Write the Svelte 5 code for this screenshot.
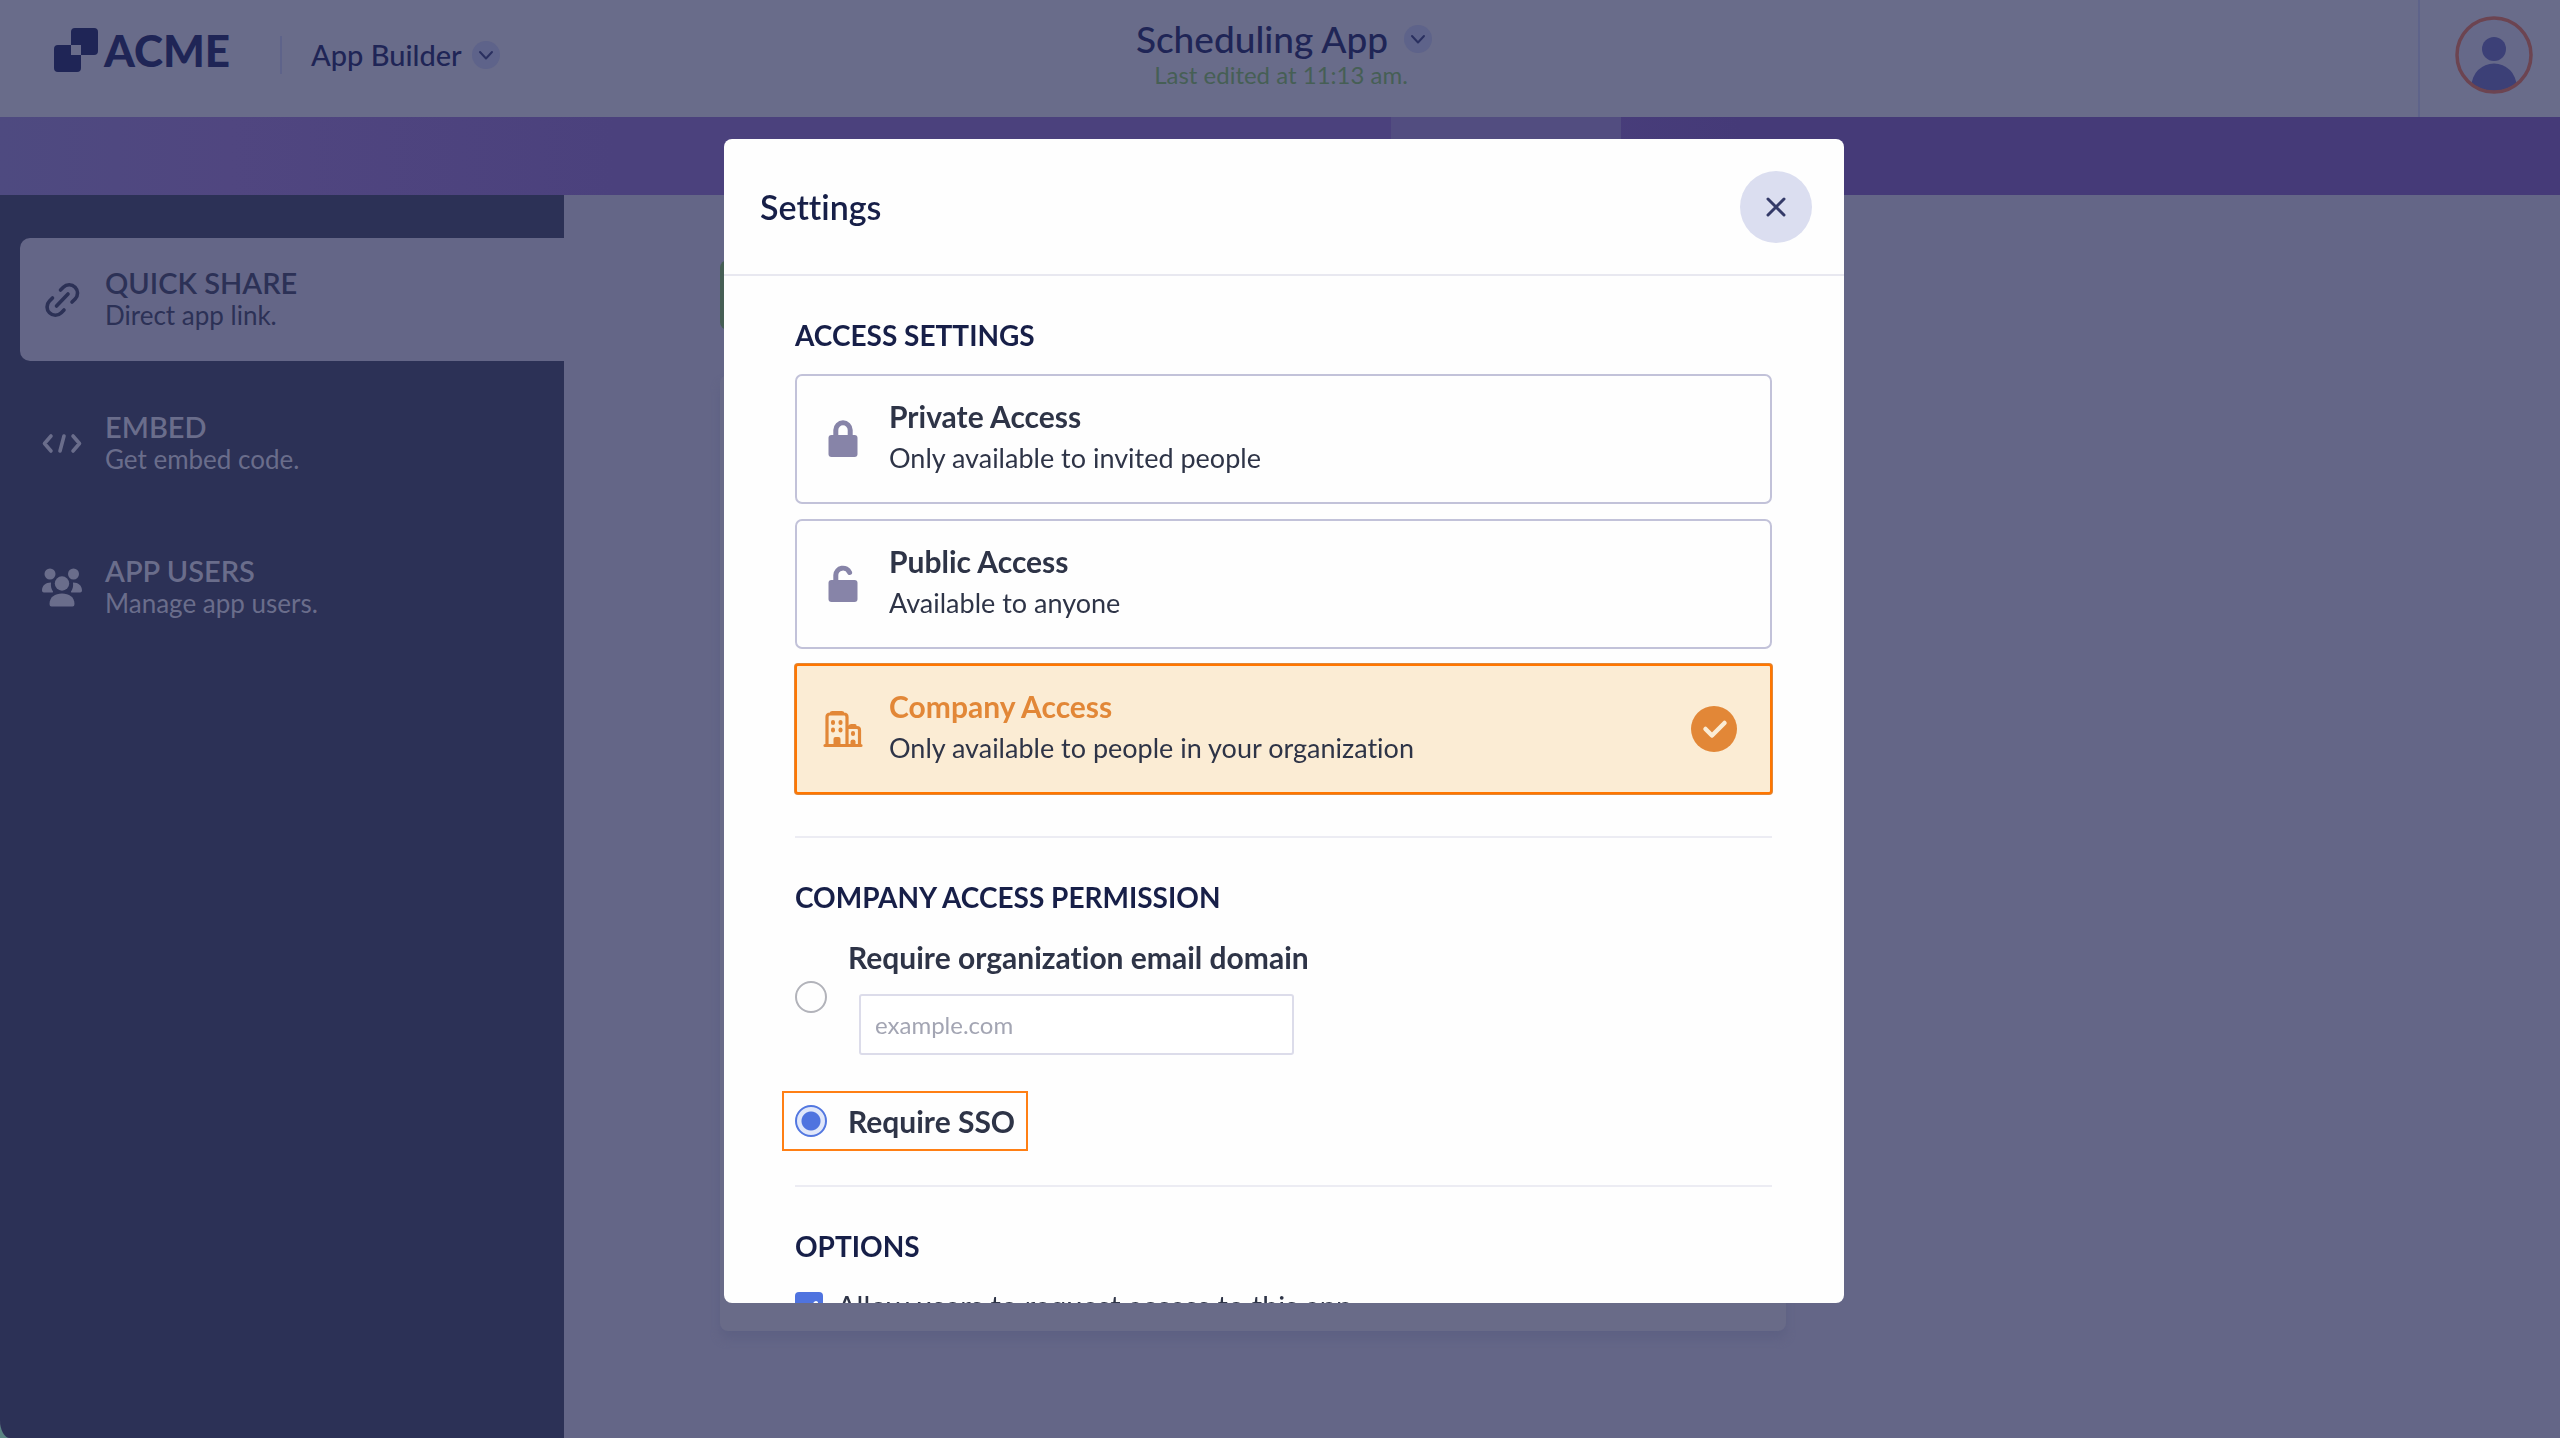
<script>
  let open = $state(true);
  let access = $state('company');
  let permission = $state('sso');
  let domain = $state('');
  let allowRequests = $state(true);

  const navItems = [
    { id: 'share', title: 'QUICK SHARE', text: 'Direct app link.' },
    { id: 'embed', title: 'EMBED', text: 'Get embed code.' },
    { id: 'users', title: 'APP USERS', text: 'Manage app users.' }
  ];

  const accessOptions = [
    { id: 'private', title: 'Private Access', text: 'Only available to invited people' },
    { id: 'public', title: 'Public Access', text: 'Available to anyone' },
    { id: 'company', title: 'Company Access', text: 'Only available to people in your organization' }
  ];
</script>

{#snippet chevron()}
  <svg class="chevron" viewBox="0 0 28 28" aria-hidden="true">
    <circle cx="14" cy="14" r="14" fill="#5e638a" />
    <path d="M8 11l6 6.500 6-6.500" fill="none" stroke="#2a3060" stroke-width="2" stroke-linecap="round" stroke-linejoin="round" />
  </svg>
{/snippet}

<div class="app">
  <header class="topbar">
    <div class="brand">
      <a class="logo" href="#home" aria-label="ACME">
        <svg viewBox="0 0 44 44" aria-hidden="true">
          <path
            fill="currentColor"
            fill-rule="evenodd"
            d="M20 0h20a4 4 0 0 1 4 4v19a4 4 0 0 1-4 4H27v13a4 4 0 0 1-4 4H4a4 4 0 0 1-4-4V21a4 4 0 0 1 4-4h13V4a4 4 0 0 1 4-4zM17 17v10h10V17z"
          />
        </svg>
        <span>ACME</span>
      </a>
      <button type="button" class="product">App Builder {@render chevron()}</button>
    </div>

    <div class="app-name">
      <button type="button" class="app-title">Scheduling App {@render chevron()}</button>
      <p class="edited">Last edited at 11:13 am.</p>
    </div>

    <div class="account">
      <button type="button" class="avatar" aria-label="Account">
        <svg viewBox="0 0 78 78" aria-hidden="true">
          <clipPath id="avatar-clip"><circle cx="39" cy="39" r="36" /></clipPath>
          <circle cx="39" cy="39" r="36" fill="#666989" />
          <g fill="#3c4077" clip-path="url(#avatar-clip)">
            <circle cx="39" cy="33" r="12" />
            <circle cx="39" cy="70" r="22.500" />
          </g>
          <circle cx="39" cy="39" r="37" fill="none" stroke="#6c4451" stroke-width="3.500" />
        </svg>
      </button>
    </div>
  </header>

  <div class="tabs"><span class="tab-active"></span></div>

  <div class="workspace">
    <nav class="sidebar">
      {#each navItems as item}
        <a class="nav-item" class:active={item.id === 'share'} href={`#${item.id}`}>
          <svg viewBox="0 0 40 40" aria-hidden="true">
            {#if item.id === 'share'}
              <g fill="none" stroke="currentColor" stroke-width="3.600" stroke-linecap="round">
                <path d="M18.500 10l2.800-2.800a8.200 8.200 0 0 1 11.800 11.800L30 22" />
                <path d="M10.500 18l-3 3a8.200 8.200 0 0 0 11.800 11.800L22 30" />
                <path d="M14.500 26L26 14" />
              </g>
            {:else if item.id === 'embed'}
              <g fill="none" stroke="currentColor" stroke-width="3.600" stroke-linecap="round" stroke-linejoin="round">
                <path d="M9 12L2.500 19.500 9 27M31 12l6.500 7.500L31 27M22 12l-4 15" />
              </g>
            {:else}
              <g fill="currentColor">
                <circle cx="8" cy="6" r="5.500" />
                <circle cx="31.500" cy="6" r="5.500" />
                <circle cx="20" cy="15.500" r="7.200" />
                <path d="M7.500 36C7.500 29 13 25.500 20 25.500S32.500 29 32.500 36q0 2.500-2 2.500h-21q-2 0-2-2.500z" />
                <path d="M0 22.500C0 17.500 3.500 14.500 9 14.500c-.5 4 .5 7 2 9q.5 1-.8 1H1.800Q0 24.500 0 22.500z" />
                <path d="M40 22.500c0-5-3.500-8-9-8 .5 4-.5 7-2 9q-.5 1 .8 1h8.400q1.800 0 1.800-2z" />
              </g>
            {/if}
          </svg>
          <span class="nav-text">
            <strong>{item.title}</strong>
            <small>{item.text}</small>
          </span>
        </a>
      {/each}
    </nav>

    <main class="content">
      <div class="share-bar"></div>
      <div class="share-card"></div>
    </main>
  </div>
</div>

{#if open}
  <div class="overlay" role="presentation">
    <div class="modal" role="dialog" aria-modal="true" aria-labelledby="settings-title">
      <header class="modal-header">
        <h1 id="settings-title">Settings</h1>
        <button type="button" class="close" aria-label="Close" onclick={() => (open = false)}>
          <svg viewBox="0 0 20 20" aria-hidden="true">
            <path d="M2 2l16 16M18 2L2 18" stroke="#343a68" stroke-width="3" stroke-linecap="round" />
          </svg>
        </button>
      </header>

      <div class="modal-body">
        <section>
          <h2>ACCESS SETTINGS</h2>
          <div class="access-list">
            {#each accessOptions as option}
              <button
                type="button"
                class="access"
                class:selected={access === option.id}
                aria-pressed={access === option.id}
                onclick={() => (access = option.id)}
              >
                <svg class="access-icon" viewBox="0 0 40 40" aria-hidden="true">
                  {#if option.id === 'private'}
                    <rect x="5.500" y="16" width="29" height="22" rx="3" fill="currentColor" />
                    <path d="M12.800 18v-7a7.200 7.200 0 0 1 14.400 0v7" fill="none" stroke="currentColor" stroke-width="5" />
                  {:else if option.id === 'public'}
                    <rect x="5.500" y="16" width="29" height="22" rx="3" fill="currentColor" />
                    <path d="M12.800 18v-7a7.200 7.200 0 0 1 13.800-2.500" fill="none" stroke="currentColor" stroke-width="5" stroke-linecap="round" />
                  {:else}
                    <g fill="none" stroke="currentColor" stroke-width="3.200" stroke-linejoin="round" stroke-linecap="round">
                      <path d="M2 36.500h36M4 36V8q0-3 3-3h14q3 0 3 3v28M8 5q0-1.500 1.500-1.500h9Q20 3.500 20 5M24 18.500h10q2.500 0 2.500 2.500v15M27 18q0-1.500 1.500-1.500h3.500" />
                    </g>
                    <g fill="currentColor">
                      <rect x="8" y="11" width="4" height="5" rx="2" />
                      <rect x="15.500" y="11" width="4" height="5" rx="2" />
                      <rect x="8" y="18.500" width="4" height="5" rx="2" />
                      <rect x="15.500" y="18.500" width="4" height="5" rx="2" />
                      <path d="M10.500 37v-7q0-2 2-2h3q2 0 2 2v7z" />
                      <rect x="28" y="22" width="4" height="5" rx="2" />
                      <path d="M27.500 37v-4.500q0-2 2.500-2t2.500 2V37z" />
                    </g>
                  {/if}
                </svg>
                <span class="access-text">
                  <strong>{option.title}</strong>
                  <span>{option.text}</span>
                </span>
                {#if access === option.id}
                  <svg class="access-check" viewBox="0 0 46 46" aria-hidden="true">
                    <circle cx="23" cy="23" r="23" fill="#e28737" />
                    <path d="M14.500 23l6.500 6.500L33.500 17" fill="none" stroke="#fbecd4" stroke-width="4.500" stroke-linecap="round" stroke-linejoin="round" />
                  </svg>
                {/if}
              </button>
            {/each}
          </div>
        </section>

        <section class="permission">
          <h2>COMPANY ACCESS PERMISSION</h2>
          <div class="field">
            <input type="radio" id="perm-domain" name="permission" value="domain" bind:group={permission} />
            <div class="field-body">
              <label for="perm-domain">Require organization email domain</label>
              <input type="text" class="domain" aria-label="Email domain" placeholder="example.com" bind:value={domain} />
            </div>
          </div>
          <div class="field sso">
            <input type="radio" id="perm-sso" name="permission" value="sso" bind:group={permission} />
            <label for="perm-sso">Require SSO</label>
          </div>
        </section>

        <section>
          <h2>OPTIONS</h2>
          <label class="option">
            <input type="checkbox" bind:checked={allowRequests} />
            <span class="tick">
              <svg viewBox="0 0 28 28" aria-hidden="true">
                <path d="M7 15l5 5 9-9" fill="none" stroke="#fff" stroke-width="4" stroke-linecap="round" stroke-linejoin="round" />
              </svg>
            </span>
            Allow users to request access to this app
          </label>
        </section>
      </div>
    </div>
  </div>
{/if}

<style>
  :global(body) {
    background: #5a8582;
  }

  .app,
  .modal {
    font-family: Lato, 'Open Sans', sans-serif;
    font-size: 29px;
    font-variant-ligatures: none;
    line-height: 34px;
  }

  .app {
    display: flex;
    flex-direction: column;
    min-height: 100vh;
    overflow: hidden;
    border-bottom-left-radius: 10px 18px;
    background: #646687;
    color: #1f2556;
  }

  button {
    padding: 0;
    border: none;
    background: none;
    font: inherit;
    font-variant-ligatures: none;
    color: inherit;
    cursor: pointer;
  }

  a {
    color: inherit;
    text-decoration: none;
  }

  h1,
  h2,
  p {
    margin: 0;
  }

  svg {
    display: block;
    flex: none;
  }

  /* Top bar */
  .topbar {
    display: grid;
    grid-template-columns: 1fr auto 1fr;
    height: 117px;
    padding-left: 8px;
    background: #696c8a;
  }

  .brand {
    display: flex;
    align-items: flex-start;
    padding-left: 46px;
  }

  .logo {
    display: flex;
    align-items: center;
    gap: 6px;
    margin-top: 28px;
    font-size: 44px;
    font-weight: 900;
    line-height: 44px;
  }

  .logo svg {
    width: 44px;
    height: 44px;
  }

  .product {
    display: flex;
    align-items: center;
    gap: 10px;
    height: 38px;
    margin: 36px 0 0 50px;
    padding-left: 29px;
    border-left: 2px solid #5e638a;
    font-weight: 500;
  }

  .chevron {
    width: 28px;
    height: 28px;
  }

  .app-name {
    padding-top: 18px;
  }

  .app-title {
    display: flex;
    align-items: center;
    gap: 16px;
    font-size: 37px;
    font-weight: 500;
    line-height: 42px;
  }

  .edited {
    padding-right: 6px;
    color: #465f55;
    font-size: 24px;
    line-height: 30px;
    text-align: center;
  }

  .account {
    display: flex;
    align-items: center;
    justify-self: end;
    padding: 0 27px 8px 35px;
    border-left: 2px solid #5e638a;
  }

  .avatar svg {
    width: 78px;
    height: 78px;
  }

  .tabs {
    display: flex;
    height: 78px;
    background: linear-gradient(90deg, #4e4a80 0%, #504680 9%, #4b417d 24%, #4b417d 55%, #453a78 68%);
  }

  .tab-active {
    width: 9%;
    margin-left: 1391px;
    background: #524d80;
  }

  .workspace {
    display: flex;
    flex: 1;
  }

  /* Sidebar */
  .sidebar {
    display: flex;
    flex: none;
    flex-direction: column;
    gap: 21px;
    box-sizing: border-box;
    width: 564px;
    padding: 43px 0 0 20px;
    background: #2c3156;
  }

  .nav-item {
    display: flex;
    align-items: center;
    gap: 23px;
    height: 123px;
    padding-left: 22px;
    border-radius: 10px 0 0 10px;
    color: #6a6d8b;
  }

  .nav-item svg {
    width: 40px;
    height: 40px;
  }

  .nav-item.active {
    background: #646687;
    color: #2c3156;
  }

  .nav-text {
    display: flex;
    flex-direction: column;
    padding-bottom: 4px;
  }

  .nav-text strong {
    font-weight: 600;
  }

  .nav-text small {
    font-size: 26px;
    line-height: 30px;
  }

  .content {
    display: flex;
    flex: 1;
    flex-direction: column;
    gap: 45px;
    padding: 65px 156px 107px;
  }

  .share-bar,
  .share-card {
    width: 1066px;
    border-radius: 8px;
  }

  .share-bar {
    height: 70px;
    background: #465f55;
  }

  .share-card {
    flex: 1;
    background: #696b88;
    box-shadow: 0 8px 8px #5e6183;
  }

  /* Settings modal */
  .overlay {
    position: fixed;
    inset: 0;
    display: flex;
    align-items: center;
    justify-content: center;
    padding: 4px 0 0 8px;
  }

  .modal {
    display: flex;
    flex-direction: column;
    width: 1120px;
    height: 81vh;
    overflow: hidden;
    border-radius: 8px;
    background: #fefefe;
    color: #2e3447;
  }

  .modal-header {
    display: flex;
    flex: none;
    align-items: center;
    justify-content: space-between;
    padding: 32px 32px 31px 36px;
    border-bottom: 2px solid #e8e8f0;
  }

  .modal-header h1 {
    color: #171f48;
    font-size: 34px;
    font-weight: 600;
    line-height: 38px;
  }

  .close {
    display: grid;
    place-items: center;
    width: 72px;
    height: 72px;
    border-radius: 50%;
    background: #dbdef0;
  }

  .close svg {
    width: 20px;
    height: 20px;
  }

  .modal-body {
    flex: 1;
    overflow-y: auto;
    padding: 0 72px 0 71px;
    scrollbar-width: none;
  }

  section {
    padding: 42px 0;
    border-bottom: 2px solid #ececf3;
  }

  section.permission {
    padding-bottom: 47px;
  }

  section:last-child {
    border-bottom: none;
  }

  h2 {
    color: #171f48;
    font-size: 28px;
    font-weight: 700;
    line-height: 34px;
  }

  .access-list {
    display: flex;
    flex-direction: column;
    gap: 15px;
    margin-top: 22px;
  }

  .access {
    display: flex;
    align-items: center;
    gap: 26px;
    padding: 20px 33px 20px 26px;
    border: 2px solid #c2c2d9;
    border-radius: 7px;
    text-align: left;
  }

  .access-icon {
    width: 40px;
    height: 40px;
    color: #8784a8;
  }

  .access-text {
    display: flex;
    flex: 1;
    flex-direction: column;
    gap: 2px;
    padding-bottom: 4px;
    font-size: 27px;
    line-height: 40px;
  }

  .access-text strong {
    font-size: 30px;
  }

  .access-check {
    width: 46px;
    height: 46px;
  }

  .access.selected {
    border-color: #ff7600;
    border-radius: 3px;
    background: #fbecd4;
    box-shadow: 0 0 0 1px #e28737;
  }

  .selected .access-icon,
  .selected strong {
    color: #e28737;
  }

  .field {
    display: flex;
    align-items: center;
    gap: 21px;
    margin-top: 26px;
  }

  .field label {
    font-size: 30px;
    font-weight: 700;
  }

  .field-body {
    display: flex;
    flex-direction: column;
    gap: 20px;
  }

  input[type='radio'] {
    box-sizing: border-box;
    flex: none;
    width: 32px;
    height: 32px;
    margin: 0;
    border: 2px solid #b2b3ba;
    border-radius: 50%;
    appearance: none;
  }

  input[type='radio']:checked {
    border-color: #5277e0;
    background: radial-gradient(circle, #4f73df 9px, #e0e7fa 10px);
  }

  .domain {
    box-sizing: border-box;
    width: 435px;
    height: 61px;
    margin-left: 11px;
    padding: 0 14px;
    border: 2px solid #dcdcea;
    border-radius: 3px;
    background: #fff;
    font: inherit;
    font-size: 24px;
  }

  .domain::placeholder {
    color: #a3a5b3;
  }

  .sso {
    width: fit-content;
    margin-top: 49px;
    outline: 2px solid #ff7f14;
    outline-offset: 11px;
  }

  .option {
    display: flex;
    align-items: center;
    gap: 14px;
    margin-top: 26px;
  }

  .option input {
    position: absolute;
    opacity: 0;
  }

  .tick {
    box-sizing: border-box;
    width: 28px;
    height: 28px;
    border: 2px solid #b2b3ba;
    border-radius: 4px;
  }

  .tick svg {
    display: none;
  }

  .option input:checked + .tick {
    border: none;
    background: #4f73df;
  }

  .option input:checked + .tick svg {
    display: block;
  }
</style>
